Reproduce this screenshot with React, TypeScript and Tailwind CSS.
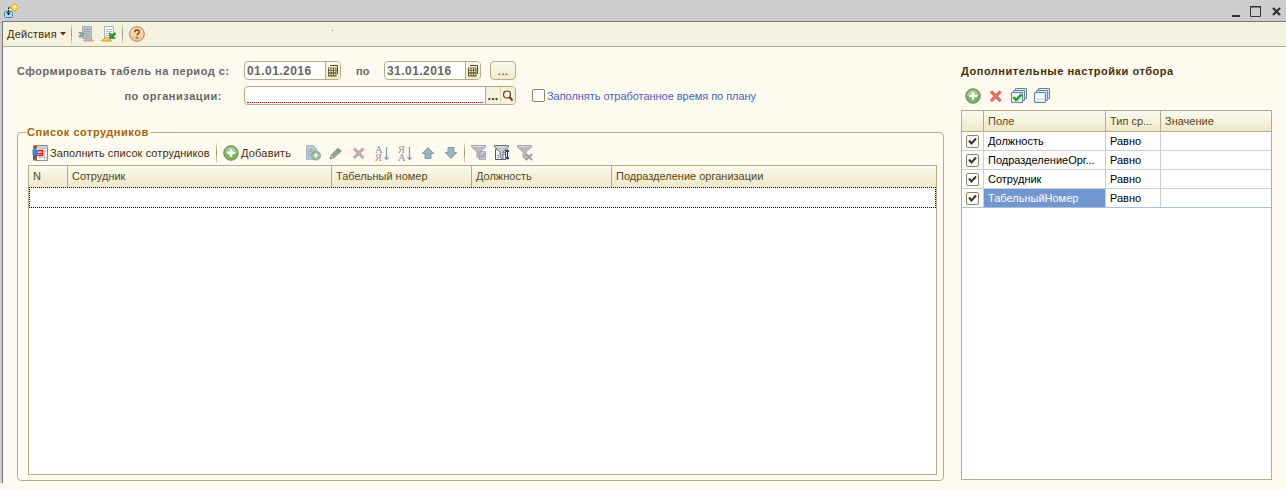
import type { ReactNode } from "react";

interface FilterRow {
  field: string;
  active?: boolean;
}

const filters: FilterRow[] = [
  { field: "Должность" },
  { field: "ПодразделениеОрг..." },
  { field: "Сотрудник" },
  { field: "ТабельныйНомер", active: true },
];

function Svg({ children, className = "" }: { children: ReactNode; className?: string }) {
  return (
    <svg width="16" height="16" viewBox="0 0 16 16" fill="none" className={`block shrink-0 overflow-visible ${className}`}>
      {children}
    </svg>
  );
}

function Divider() {
  return <span className="h-[20px] w-px shrink-0 bg-linear-to-b from-[#e6e0c2] via-[#9a9468] to-[#e6e0c2]" />;
}

function AppIcon() {
  return (
    <Svg>
      <path d="M1.500 9.500 2.500 8.500h6l1 1v4l-1 1h-6l-1-1z" fill="#b5dcf7" stroke="#4182ae" />
      <path d="M5.500 11V4.500H8" stroke="#111" strokeDasharray="1.500 1" />
      <path d="M3.500 9.500h4l-2 3z" fill="#111" />
      <path d="M11.500.5 15.500 4.500 11.500 8.500 7.500 4.500z" fill="#ffdf3e" stroke="#d6a81c" />
      <path d="M11.500 2 14 4.500h-4z" fill="#fff6b8" />
    </Svg>
  );
}

function PageLines({ x }: { x: number }) {
  return <path d={`M${x} 3.500h6M${x} 5.500h6M${x} 7.500h6M${x} 9.500h6`} stroke="#a9bdc9" />;
}

function SaveValuesIcon() {
  return (
    <Svg>
      <path d="M4.500.5h9v12h-9z" fill="#bcc4c6" stroke="#a3aeb2" />
      <path d="M6 3.500h6M6 5.500h6M6 7.500h5M7 9.500h4" stroke="#98a5aa" />
      <path d="M0 6h6v6L4.200 10.200 2 12.300.2 10.500 2.200 8.300z" fill="#8fa397" />
      <path d="M5.500 15 10.500 10.500 15.500 15z" fill="#c1b9ac" stroke="#b0a99e" />
    </Svg>
  );
}

function RestoreValuesIcon() {
  return (
    <Svg>
      <path d="M3.500.5h9v12h-9z" fill="#f7fbff" stroke="#9bb5c6" />
      <PageLines x={5} />
      <path d="M8.500 6.500V12.500h6l-2-2L15 8 13.500 6.500l-2.800 2.300z" fill="#319a2b" stroke="#1f7a22" strokeWidth=".5" />
      <path d="M.5 15 5.500 10.500l5 4.500z" fill="#f6cd66" stroke="#cf9a35" />
    </Svg>
  );
}

function HelpIcon() {
  return (
    <Svg>
      <circle cx="8" cy="8" r="7.300" fill="#fbd6a8" stroke="#9b8268" />
      <path d="M2.500 10a6 6 0 0 0 11 0c-3 1.500-8 1.500-11 0z" fill="#fbb875" />
      <path d="M5.700 6.300C5.700 3.300 10.300 3.400 10.300 5.900 10.300 7.700 8 7.600 8 9.600M8 11v1.500" stroke="#6b4a2c" strokeWidth="1.400" />
    </Svg>
  );
}

function FillIcon() {
  return (
    <Svg>
      <path d="M3.500.5h12v15h-12z" fill="#f3f4f6" stroke="#8a8f96" />
      <path d="M4 1h11.500v2H4z" fill="#c9ccd2" />
      <path d="M6 6.500h9M6 12.500h9M6 3.500h9M12.500 3v12" stroke="#c4c8ce" />
      <path d="M5.500 5.500h5v5h-5M5.500 8.500h5" stroke="#f01418" strokeWidth="1.300" />
      <circle cx="3" cy="2.200" r="2" fill="#8a5534" />
      <path d="M.5 4.300h4.500l1 2V10H.5z" fill="#2c8edb" />
      <path d="M1 10h4v5.500H3.500V12l-1 3.500H1z" fill="#6a5a50" />
    </Svg>
  );
}

function AddIcon() {
  return (
    <Svg>
      <circle cx="8" cy="8" r="7.300" fill="#76b35d" stroke="#6f8f62" />
      <path d="M2 8a6 6 0 0 1 12 0c-3 1-9 1-12 0z" fill="#abd396" opacity=".8" />
      <path d="M8 4v8M4 8h8" stroke="#fff" strokeWidth="2.600" />
    </Svg>
  );
}

function CopyIcon() {
  return (
    <Svg>
      <path d="M1.500.5h7l3 3v11h-10z" fill="#b9c7cf" stroke="#a8b8c2" />
      <path d="M3 4.500h5M3 6.500h6M3 8.500h4M3 10.500h4" stroke="#9aabb7" />
      <circle cx="11" cy="10.500" r="4.500" fill="#9bb89b" stroke="#90a98f" />
      <path d="M11 8v5M8.500 10.500h5" stroke="#eef4e8" strokeWidth="1.700" />
    </Svg>
  );
}

function EditIcon() {
  return (
    <Svg>
      <path d="m2 14 1-4 7-7 3.500 3L6 13z" fill="#91a98b" stroke="#7f967a" strokeWidth=".6" />
      <path d="m2 14 1-4 3 3z" fill="#c9c2aa" />
      <path d="m2 14 .5-2L4 13.500z" fill="#667563" />
      <path d="m8.500 4.500 3.500 3" stroke="#73896d" />
    </Svg>
  );
}

function DeleteIcon({ muted = false }: { muted?: boolean }) {
  return (
    <Svg>
      <path d="m3 3.500 9.500 9.500M12.500 3.500 3 13" stroke={muted ? "#b5a39d" : "#d64d41"} strokeWidth="3" />
      <path d="m3 3.500 9.500 9.500M12.500 3.500 3 13" stroke={muted ? "#c3b2aa" : "#f17567"} strokeWidth="1.300" />
    </Svg>
  );
}

function SortIcon({ desc = false }: { desc?: boolean }) {
  return (
    <Svg>
      <g fontFamily="Liberation Serif" fontSize="10.500">
        <text x="1" y="7.500" fill={desc ? "#b08e88" : "#8295a6"}>{desc ? "Я" : "А"}</text>
        <text x="1" y="16" fill={desc ? "#8295a6" : "#b08e88"}>{desc ? "А" : "Я"}</text>
      </g>
      <path d="M12.500 2v12M10.500 12l2 2.500 2-2.500" stroke="#8197a8" strokeWidth="1.200" />
    </Svg>
  );
}

function ArrowIcon({ down = false }: { down?: boolean }) {
  return (
    <Svg className={down ? "rotate-180" : ""}>
      <path d="M8 2.500 13.700 8.500H11v5H5v-5H2.300z" fill="#9db3c0" stroke="#8199a8" />
    </Svg>
  );
}

function FunnelIcon({ kind }: { kind: "value" | "list" | "clear" }) {
  return (
    <Svg>
      {kind === "list" && (
        <>
          <path d="M1.500 4.500h10v10h-10z" fill="#fff" stroke="#3e5875" />
          <path d="M3 10.500h2M3 12.500h2M9 7.500h2M9 9.500h2" stroke="#829bb4" />
        </>
      )}
      {kind === "value" && <path d="M8.500 6.500h6v8h-6z" fill="#c5cdd1" stroke="#a2b1b9" />}
      <path
        d="M.5.5h14v1.500L9 7v7.500L6 12V7L.5 2z"
        fill={kind === "list" ? "#c3c9ce" : "#b6b9b9"}
        stroke={kind === "list" ? "#6a7178" : "#a4a7a8"}
      />
      <path d="M2 1.500h11" stroke="#d9dcdc" />
      {kind === "value" && <path d="m10 10 1.500 2 2.500-4" stroke="#879fad" strokeWidth="1.300" />}
      {kind === "list" && <path d="M13.500 5v9M12 6.500l1.500-1.500 1.500 1.500M12 12.500l1.500 1.500 1.500-1.500" stroke="#183a5e" strokeWidth="1.200" />}
      {kind === "clear" && <path d="m9 9 6 6M15 9l-6 6" stroke="#b1958e" strokeWidth="2" />}
    </Svg>
  );
}

function StackIcon({ checked = false }: { checked?: boolean }) {
  return (
    <Svg>
      <path d="M4.500.5h11v10h-11z" fill="#d5e5f0" stroke="#6488a2" />
      <path d="M2.500 2.500h11v10h-11z" fill="#d5e5f0" stroke="#6488a2" />
      <path d="M.5 4.500h11v10H.5z" fill="#dfeaf3" stroke="#6488a2" />
      <path d="M2 6h8v4H2z" fill="#f8fbfd" />
      {checked && <path d="m2.500 9 2.500 3L10.500 6.500" stroke="#2d9d22" strokeWidth="2.500" />}
    </Svg>
  );
}

function CalendarIcon() {
  return (
    <svg width="12" height="12" viewBox="0 0 12 12" fill="none" className="block">
      <path d="M3 .500h7.500V9M10 2.500h.5" stroke="#5c4a10" />
      <path d="M1 2.500h8.500v9H1z" fill="#6b5a20" />
      <path d="M2 4h1.500M4.500 4H6M7 4h1.500M2 6.500h1.500M4.500 6.500H6M7 6.500h1.500M2 9.500h1.500M4.500 9.500H6M7 9.500h1.500" stroke="#fbf9ee" strokeWidth="1.300" />
    </svg>
  );
}

function DateInput({ value }: { value: string }) {
  return (
    <div className="flex h-[19px] w-[97px] shrink-0 overflow-hidden rounded-[4px] border border-[#b5ad86] bg-white">
      <span className="w-20 shrink-0 pl-0.5 text-[12px] leading-[18px] font-bold tracking-[0.45px] whitespace-nowrap text-[#666]">
        {value}
      </span>
      <span className="flex flex-1 items-center justify-center border-l border-[#b5ad86] bg-linear-to-b from-[#fbf9ee] to-[#eee9cf]">
        <CalendarIcon />
      </span>
    </div>
  );
}

function Check() {
  return (
    <span className="flex h-[13px] w-[13px] items-center justify-center rounded-[2px] border border-[#8f845c] bg-white">
      <svg width="9" height="9" viewBox="0 0 9 9" fill="none">
        <path d="M1 3.500 3.500 6.500 8 1.500" stroke="#333" strokeWidth="2" />
      </svg>
    </span>
  );
}

function HeadCell({ children, className }: { children?: ReactNode; className: string }) {
  return <div className={`h-full border-r border-[#b5ad86] pl-1 whitespace-nowrap last:border-r-0 ${className}`}>{children}</div>;
}

function TitleBar() {
  return (
    <header className="flex h-[21px] shrink-0 justify-between bg-[#cdcdcd]">
      <div className="pt-[3px] pl-[3px]">
        <AppIcon />
      </div>
      <svg width="56" height="21" viewBox="0 0 56 21" fill="none">
        <path d="M2 16h8" stroke="#333" strokeWidth="2" />
        <path d="M20.500 7v9.500h10V7M20 7h11" stroke="#333" />
        <path d="M20 6.500h11" stroke="#333" />
        <path d="m43 8 7 7M50 8l-7 7" stroke="#333" strokeWidth="2.300" />
      </svg>
    </header>
  );
}

function EmployeeList() {
  return (
    <section className="h-[349px] w-[927px] shrink-0 rounded-[4px] border border-[#b5ad86] px-[10px]">
      <h2 className="relative top-[-9px] -ml-0.5 h-4 w-[124px] bg-[#fffaf0] pl-px text-[11px] leading-4 font-bold tracking-[0.52px] whitespace-nowrap text-[#a66500]">
        Список сотрудников
      </h2>
      <div className="-mt-[7px] flex h-[22px] items-center text-[11px] whitespace-nowrap text-[#3d2f08]">
        <span className="ml-1"><FillIcon /></span>
        <span className="ml-0.5 w-[166px] tracking-[0.08px]">Заполнить список сотрудников</span>
        <Divider />
        <span className="ml-[6px]"><AddIcon /></span>
        <span className="ml-0.5 w-[64px] tracking-[0.2px]">
          <span className="underline">Д</span>обавить
        </span>
        <div className="flex gap-[7px]">
          <CopyIcon />
          <EditIcon />
          <DeleteIcon muted />
          <SortIcon />
          <SortIcon desc />
          <ArrowIcon />
          <ArrowIcon down />
        </div>
        <span className="ml-[5px] flex"><Divider /></span>
        <div className="ml-[6px] flex gap-[7px]">
          <FunnelIcon kind="value" />
          <FunnelIcon kind="list" />
          <FunnelIcon kind="clear" />
        </div>
      </div>
      <div className="mt-px h-[310px] w-[909px] border border-[#b5ad86] bg-white">
        <div className="flex h-[21px] bg-linear-to-b from-[#fafaf0] to-[#eee8c8] text-[11px] leading-5 text-[#5a4612]">
          <HeadCell className="w-[39px]">N</HeadCell>
          <HeadCell className="w-[264px]">Сотрудник</HeadCell>
          <HeadCell className="w-[140px]">Табельный номер</HeadCell>
          <HeadCell className="w-[140px]">Должность</HeadCell>
          <HeadCell className="flex-1">Подразделение организации</HeadCell>
        </div>
        <div className="h-[21px] border border-dotted border-black" />
      </div>
    </section>
  );
}

function FilterPanel() {
  return (
    <aside className="w-[311px]">
      <h2 className="h-4 text-[11px] leading-4 font-bold tracking-[0.52px] whitespace-nowrap text-[#3d2f08]">
        Дополнительные настройки отбора
      </h2>
      <div className="mt-[9px] flex gap-[7px] pl-1">
        <AddIcon />
        <DeleteIcon />
        <StackIcon checked />
        <StackIcon />
      </div>
      <div className="mt-[6px] h-[370px] border border-[#b5ad86] bg-white text-[11px]">
        <div className="flex h-[21px] border-b border-[#b5ad86] bg-linear-to-b from-[#fafaf0] to-[#eee8c8] leading-5 text-[#5a4612]">
          <HeadCell className="w-[22px]" />
          <HeadCell className="w-[122px]">Поле</HeadCell>
          <HeadCell className="w-[55px]">Тип ср...</HeadCell>
          <HeadCell className="flex-1">Значение</HeadCell>
        </div>
        {filters.map((row) => (
          <div
            key={row.field}
            className={`flex h-[19px] border-b leading-[19px] whitespace-nowrap text-black ${row.active ? "border-[#a9c0e0]" : "border-[#c9d0d0]"}`}
          >
            <div className="flex w-[22px] items-center justify-center border-r border-[#c9d0d0]"><Check /></div>
            <div className={`w-[122px] border-r border-[#c9d0d0] pl-1 ${row.active ? "bg-[#7097d0] text-white" : ""}`}>
              {row.field}
            </div>
            <div className="w-[55px] border-r border-[#c9d0d0] pl-1">Равно</div>
          </div>
        ))}
      </div>
    </aside>
  );
}

export default function App() {
  return (
    <div className="h-[489px] w-[1286px] overflow-hidden bg-[#fffaf0] font-['Liberation_Sans',Arial,sans-serif]">
      <div className="flex h-[483px] flex-col bg-[#cdcdcd]">
        <TitleBar />
        <div className="ml-0.5 min-h-0 flex-1 border-t border-l border-[#777] bg-[#fffaf0]">
          <nav className="flex h-[25px] items-center border-b border-[#b5ad86] bg-[#f4f1de] pl-1 text-[11px] text-[#3d2f08]">
            <span className="w-[53px] tracking-[0.2px]">Действия</span>
            <svg width="6" height="4" viewBox="0 0 6 4"><path d="M0 0h6L3 3.500z" fill="#4d3800" /></svg>
            <span className="ml-[5px] flex"><Divider /></span>
            <span className="ml-[6px]"><SaveValuesIcon /></span>
            <span className="ml-[7px]"><RestoreValuesIcon /></span>
            <span className="ml-[5px] flex"><Divider /></span>
            <span className="ml-[6px]"><HelpIcon /></span>
            <span className="mb-2 ml-[187px] h-px w-px bg-[#777]" />
          </nav>
          <main className="flex gap-[17px] pl-[14px]">
            <div className="w-[927px] shrink-0">
              <div className="flex h-[85px] flex-col gap-[6px] pt-[14px] text-[11px] font-bold text-[#666]">
                <div className="flex h-[19px] items-center">
                  <span className="w-[227px] pt-0.5 tracking-[0.5px] whitespace-nowrap">Сформировать табель на период с:</span>
                  <DateInput value="01.01.2016" />
                  <span className="w-[43px] pt-0.5 pl-[15px]">по</span>
                  <DateInput value="31.01.2016" />
                  <button type="button" className="ml-[9px] h-[19px] w-[26px] rounded-[4px] border border-[#b5ad86] bg-linear-to-b from-[#fbf9ee] to-[#eee9cf] text-[13px] leading-4 font-normal text-[#4d3800]">
                    ...
                  </button>
                </div>
                <div className="flex h-[19px] items-center">
                  <span className="w-[227px] pt-0.5 pr-[22px] text-right tracking-[0.55px]">по организации:</span>
                  <div className="flex h-[19px] w-[272px] overflow-hidden rounded-[4px] border border-[#b5ad86] bg-white">
                    <span className="mx-0.5 mb-px flex-1 border-0 border-b border-dotted border-b-[#e0001c]" />
                    <span className="w-[15px] border-l border-[#b5ad86] bg-[#f4f1de] text-center text-[13px] leading-[17px] text-[#4d3800]">...</span>
                    <span className="flex w-[15px] items-center justify-center border-l border-[#ddd7b5] bg-[#f4f1de]">
                      <svg width="12" height="12" viewBox="0 0 12 12" fill="none">
                        <circle cx="5" cy="4.500" r="3.500" stroke="#5c4a10" strokeWidth="1.200" />
                        <path d="m7.500 7 3 3.500" stroke="#5c4a10" strokeWidth="2" />
                      </svg>
                    </span>
                  </div>
                  <span className="ml-4 h-[13px] w-[13px] rounded-[2px] border border-[#8f845c] bg-white" />
                  <span className="ml-0.5 pt-0.5 font-normal tracking-[-0.04px] whitespace-nowrap text-[#4b5dc4]">Заполнять отработанное время по плану</span>
                </div>
              </div>
              <EmployeeList />
            </div>
            <div className="pt-4">
              <FilterPanel />
            </div>
          </main>
        </div>
      </div>
    </div>
  );
}
